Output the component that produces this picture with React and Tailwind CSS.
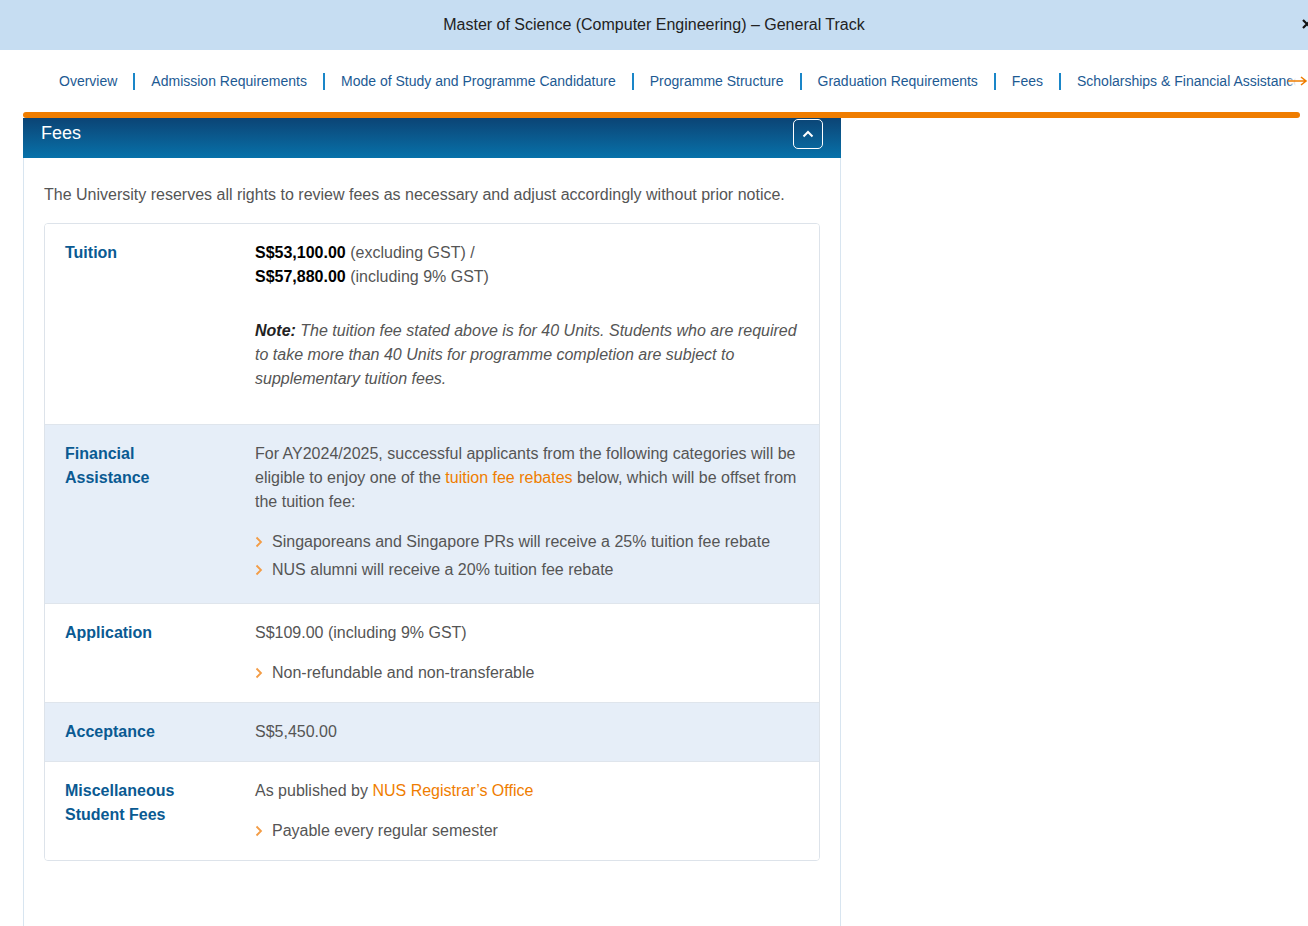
import React from "react";

const navItems = [
  "Overview",
  "Admission Requirements",
  "Mode of Study and Programme Candidature",
  "Programme Structure",
  "Graduation Requirements",
  "Fees",
  "Scholarships & Financial Assistance",
];

function Chevron() {
  return (
    <svg width="8" height="12" viewBox="0 0 8 12" className="shrink-0">
      <polyline points="1.5,1.5 6,6 1.5,10.5" fill="none" stroke="#f39c45" strokeWidth="1.8" />
    </svg>
  );
}

function Bullet({ children }) {
  return (
    <li className="flex items-center gap-[9px] leading-[28px]">
      <Chevron />
      <span>{children}</span>
    </li>
  );
}

function Row({ label, blue, children, className = "" }) {
  return (
    <div
      className={`flex border-t border-[#dfe5ec] first:border-t-0 ${blue ? "bg-[#e6eef8]" : "bg-white"} ${className}`}
    >
      <div className="w-[210px] shrink-0 pl-[20px] font-bold text-[#0a5a92] leading-[24px]">{label}</div>
      <div className="flex-1 pr-[20px] text-[#555] leading-[24px]">{children}</div>
    </div>
  );
}

export default function App() {
  return (
    <div className="w-[1308px] h-[926px] overflow-hidden bg-white" style={{ fontFamily: '"Liberation Sans", Arial, sans-serif' }}>
      {/* Title bar */}
      <div className="relative h-[50px] bg-[#c6ddf2] flex items-center justify-center overflow-hidden">
        <span className="text-[16px] text-[#222] leading-[20px]">
          Master of Science (Computer Engineering) – General Track
        </span>
        <svg className="absolute left-[1302px] top-[19px]" width="10" height="10" viewBox="0 0 10 10">
          <path d="M1 1 L9 9 M9 1 L1 9" stroke="#111" strokeWidth="2.2" />
        </svg>
      </div>

      {/* Nav */}
      <div className="relative pt-[21px] h-[62px] overflow-hidden">
        <div className="flex items-center whitespace-nowrap pl-[59px] text-[14px] leading-[20px] text-[#1d5a93]">
          {navItems.map((item, i) => (
            <React.Fragment key={item}>
              {i > 0 && <span className="mx-[16px] w-[2px] h-[17px] bg-[#1a86c8] shrink-0" />}
              <span>{item}</span>
            </React.Fragment>
          ))}
        </div>
        <div className="absolute right-0 top-[21px] h-[20px] w-[20px] flex items-center justify-end bg-gradient-to-r from-white/0 to-white to-40%">
          <svg width="20" height="10" viewBox="0 0 20 10">
            <path d="M0 5 H18 M13 1 L18 5 L13 9" fill="none" stroke="#ef7d00" strokeWidth="1.6" />
          </svg>
        </div>
      </div>

      {/* Orange bar */}
      <div className="ml-[23px] w-[1277px] h-[6px] rounded-full bg-[#ef7d00]" />

      {/* Panel */}
      <div className="ml-[23px] w-[818px]">
        <div className="h-[40px] flex items-start justify-between bg-gradient-to-b from-[#0b4475] to-[#0672aa]">
          <span className="pl-[18px] pt-[3px] text-[18px] leading-[24px] text-white">Fees</span>
          <button className="mt-[1px] mr-[18px] w-[30px] h-[30px] rounded-[5px] border border-white flex items-center justify-center">
            <svg width="12" height="8" viewBox="0 0 12 8">
              <polyline points="1.5,6.5 6,2 10.5,6.5" fill="none" stroke="white" strokeWidth="2" />
            </svg>
          </button>
        </div>
        <div className="w-[818px] border-x border-[#d8e5f0] pt-[25px] pl-[20px] pr-[20px] pb-[80px]">
          <p className="text-[16px] leading-[24px] text-[#555]">
            The University reserves all rights to review fees as necessary and adjust accordingly without prior notice.
          </p>
          <div className="mt-[16px] border border-[#dde3ea] rounded-[4px] overflow-hidden text-[16px]">
            <Row label="Tuition" className="pt-[17px] pb-[33px]">
              <p className="text-[#555]">
                <b className="text-black">S$53,100.00</b> (excluding GST) /
                <br />
                <b className="text-black">S$57,880.00</b> (including 9% GST)
              </p>
              <p className="mt-[30px] italic">
                <b className="text-[#222]">Note:</b> The tuition fee stated above is for 40 Units. Students who are required
                to take more than 40 Units for programme completion are subject to supplementary tuition fees.
              </p>
            </Row>
            <Row label={<>Financial<br />Assistance</>} blue className="pt-[17px] pb-[19px]">
              <p>
                For AY2024/2025, successful applicants from the following categories will be eligible to enjoy one of
                the <span className="text-[#ef7d00]">tuition fee rebates</span> below, which will be offset from the
                tuition fee:
              </p>
              <ul className="mt-[14px]">
                <Bullet>Singaporeans and Singapore PRs will receive a 25% tuition fee rebate</Bullet>
                <Bullet>NUS alumni will receive a 20% tuition fee rebate</Bullet>
              </ul>
            </Row>
            <Row label="Application" className="pt-[17px] pb-[15px]">
              <p>S$109.00 (including 9% GST)</p>
              <ul className="mt-[14px]">
                <Bullet>Non-refundable and non-transferable</Bullet>
              </ul>
            </Row>
            <Row label="Acceptance" blue className="pt-[17px] pb-[17px]">
              <p>S$5,450.00</p>
            </Row>
            <Row label={<>Miscellaneous<br />Student Fees</>} className="pt-[17px] pb-[15px]">
              <p>
                As published by <span className="text-[#ef7d00]">NUS Registrar’s Office</span>
              </p>
              <ul className="mt-[14px]">
                <Bullet>Payable every regular semester</Bullet>
              </ul>
            </Row>
          </div>
        </div>
      </div>
    </div>
  );
}
